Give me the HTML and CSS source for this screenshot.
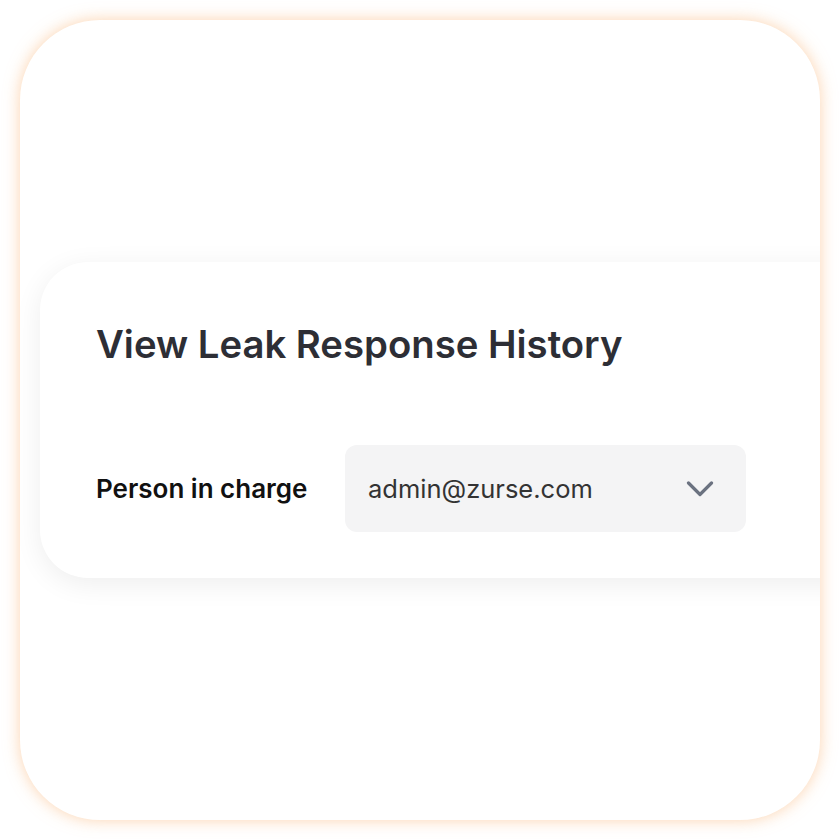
FILE: index.html
```html
<!DOCTYPE html>
<html lang="en">
<head>
  <meta charset="UTF-8" />
  <meta name="viewport" content="width=device-width, initial-scale=1.0"/>
  <title>View Leak Response History</title>
  <link rel="stylesheet" href="styles.css">
</head>
<body>
  <div class="frame">
    <div class="panel">
      <h2>View Leak Response History</h2>

      <div class="field">
        <label for="person">Person in charge</label>
        <div class="select" id="person">
          <span>admin@zurse.com</span>
          <svg class="chevron" width="28" height="16" viewBox="0 0 28 16">
            <path d="M2.5 2 L14 13.5 L25.5 2" fill="none" stroke="#6b7280" stroke-width="3.2" stroke-linecap="round" stroke-linejoin="round"/>
          </svg>
        </div>
      </div>
    </div>
  </div>
</body>
</html>
```

FILE: styles.css
```css
body {
  margin: 0;
  background: white;
  font-family: Inter, "Noto Sans", sans-serif;
}
.frame {
  width: 800px;
  height: 800px;
  margin: 20px;
  background: white;
  border-radius: 80px;
  box-shadow: 0 0 16px rgba(250, 175, 110, 0.55);
  overflow: hidden;
  padding-top: 242px;
  box-sizing: border-box;
}
.panel {
  margin-left: 20px;
  width: 860px;
  background: white;
  border-radius: 48px;
  box-shadow: 0 6px 28px rgba(0, 0, 0, 0.07);
  padding: 59px 56px 46px;
  box-sizing: border-box;
}
h2 {
  margin: 0;
  font-size: 38.3px;
  line-height: 46px;
  font-weight: 600;
  color: #2d2e35;
}
.field {
  display: flex;
  align-items: center;
  margin-top: 78px;
}
label {
  width: 249px;
  font-size: 26px;
  font-weight: 600;
  color: #111;
}
.select {
  width: 401px;
  height: 87px;
  background: #f4f4f5;
  border-radius: 12px;
  display: flex;
  align-items: center;
  justify-content: space-between;
  padding: 0 32px 0 23px;
  box-sizing: border-box;
  font-size: 25.5px;
  color: #333;
}
.chevron {
  display: block;
}
```
